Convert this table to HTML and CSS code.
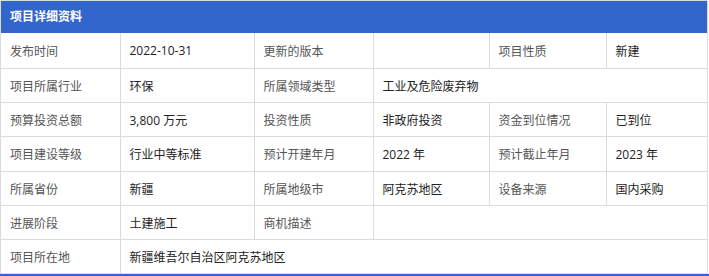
FILE: index.html
```html
<!DOCTYPE html>
<html lang="zh-CN">
<head>
<meta charset="utf-8">
<title>项目详细资料</title>
<link rel="stylesheet" href="styles.css">
</head>
<body>
<div class="panel">
  <div class="panel-head">项目详细资料</div>
  <table class="info">
    <colgroup>
      <col class="c1"><col class="c2"><col class="c3"><col class="c4"><col class="c5"><col class="c6">
    </colgroup>
    <tr class="first">
      <td class="lbl">发布时间</td><td class="val">2022-10-31</td>
      <td class="lbl">更新的版本</td><td class="val"></td>
      <td class="lbl">项目性质</td><td class="val">新建</td>
    </tr>
    <tr>
      <td class="lbl">项目所属行业</td><td class="val">环保</td>
      <td class="lbl">所属领域类型</td><td class="val" colspan="3">工业及危险废弃物</td>
    </tr>
    <tr>
      <td class="lbl">预算投资总额</td><td class="val">3,800 万元</td>
      <td class="lbl">投资性质</td><td class="val">非政府投资</td>
      <td class="lbl">资金到位情况</td><td class="val">已到位</td>
    </tr>
    <tr class="tall">
      <td class="lbl">项目建设等级</td><td class="val">行业中等标准</td>
      <td class="lbl">预计开建年月</td><td class="val">2022 年</td>
      <td class="lbl">预计截止年月</td><td class="val">2023 年</td>
    </tr>
    <tr>
      <td class="lbl">所属省份</td><td class="val">新疆</td>
      <td class="lbl">所属地级市</td><td class="val">阿克苏地区</td>
      <td class="lbl">设备来源</td><td class="val">国内采购</td>
    </tr>
    <tr>
      <td class="lbl">进展阶段</td><td class="val">土建施工</td>
      <td class="lbl">商机描述</td><td class="val" colspan="3"></td>
    </tr>
    <tr>
      <td class="lbl">项目所在地</td><td class="val" colspan="5">新疆维吾尔自治区阿克苏地区</td>
    </tr>
  </table>
</div>
<div class="next-head"></div>
</body>
</html>
```
FILE: styles.css
```css
html, body {
  margin: 0;
  padding: 0;
  background: #fff;
}
body {
  font-family: "Open Sans", "Noto Sans CJK SC", sans-serif;
  font-size: 12px;
}
.panel {
  width: 708px;
  box-sizing: border-box;
  border: 1px solid #dcdcdc;
  border-bottom: none;
}
.panel-head {
  height: 32px;
  line-height: 32px;
  padding-left: 9px;
  background: #3366cc;
  color: #fff;
  font-weight: bold;
}
.info {
  width: 100%;
  border-collapse: collapse;
  table-layout: fixed;
}
.c1 { width: 119px; }
.c2 { width: 134px; }
.c3 { width: 119px; }
.c4 { width: 116px; }
.c5 { width: 117px; }
.c6 { width: auto; }
.info td {
  border: 1px solid #dcdcdc;
  height: 33px;
  padding: 0 9px;
  white-space: nowrap;
}
.info tr.first td {
  border-top: none;
  height: 35px;
}
.info tr.tall td { height: 34px; }
.info tr td:first-child { border-left: none; }
.info tr td:last-child { border-right: none; }
.lbl { color: #555; }
.val { color: #222; }
.next-head {
  height: 20px;
  background: #3366cc;
}
```
